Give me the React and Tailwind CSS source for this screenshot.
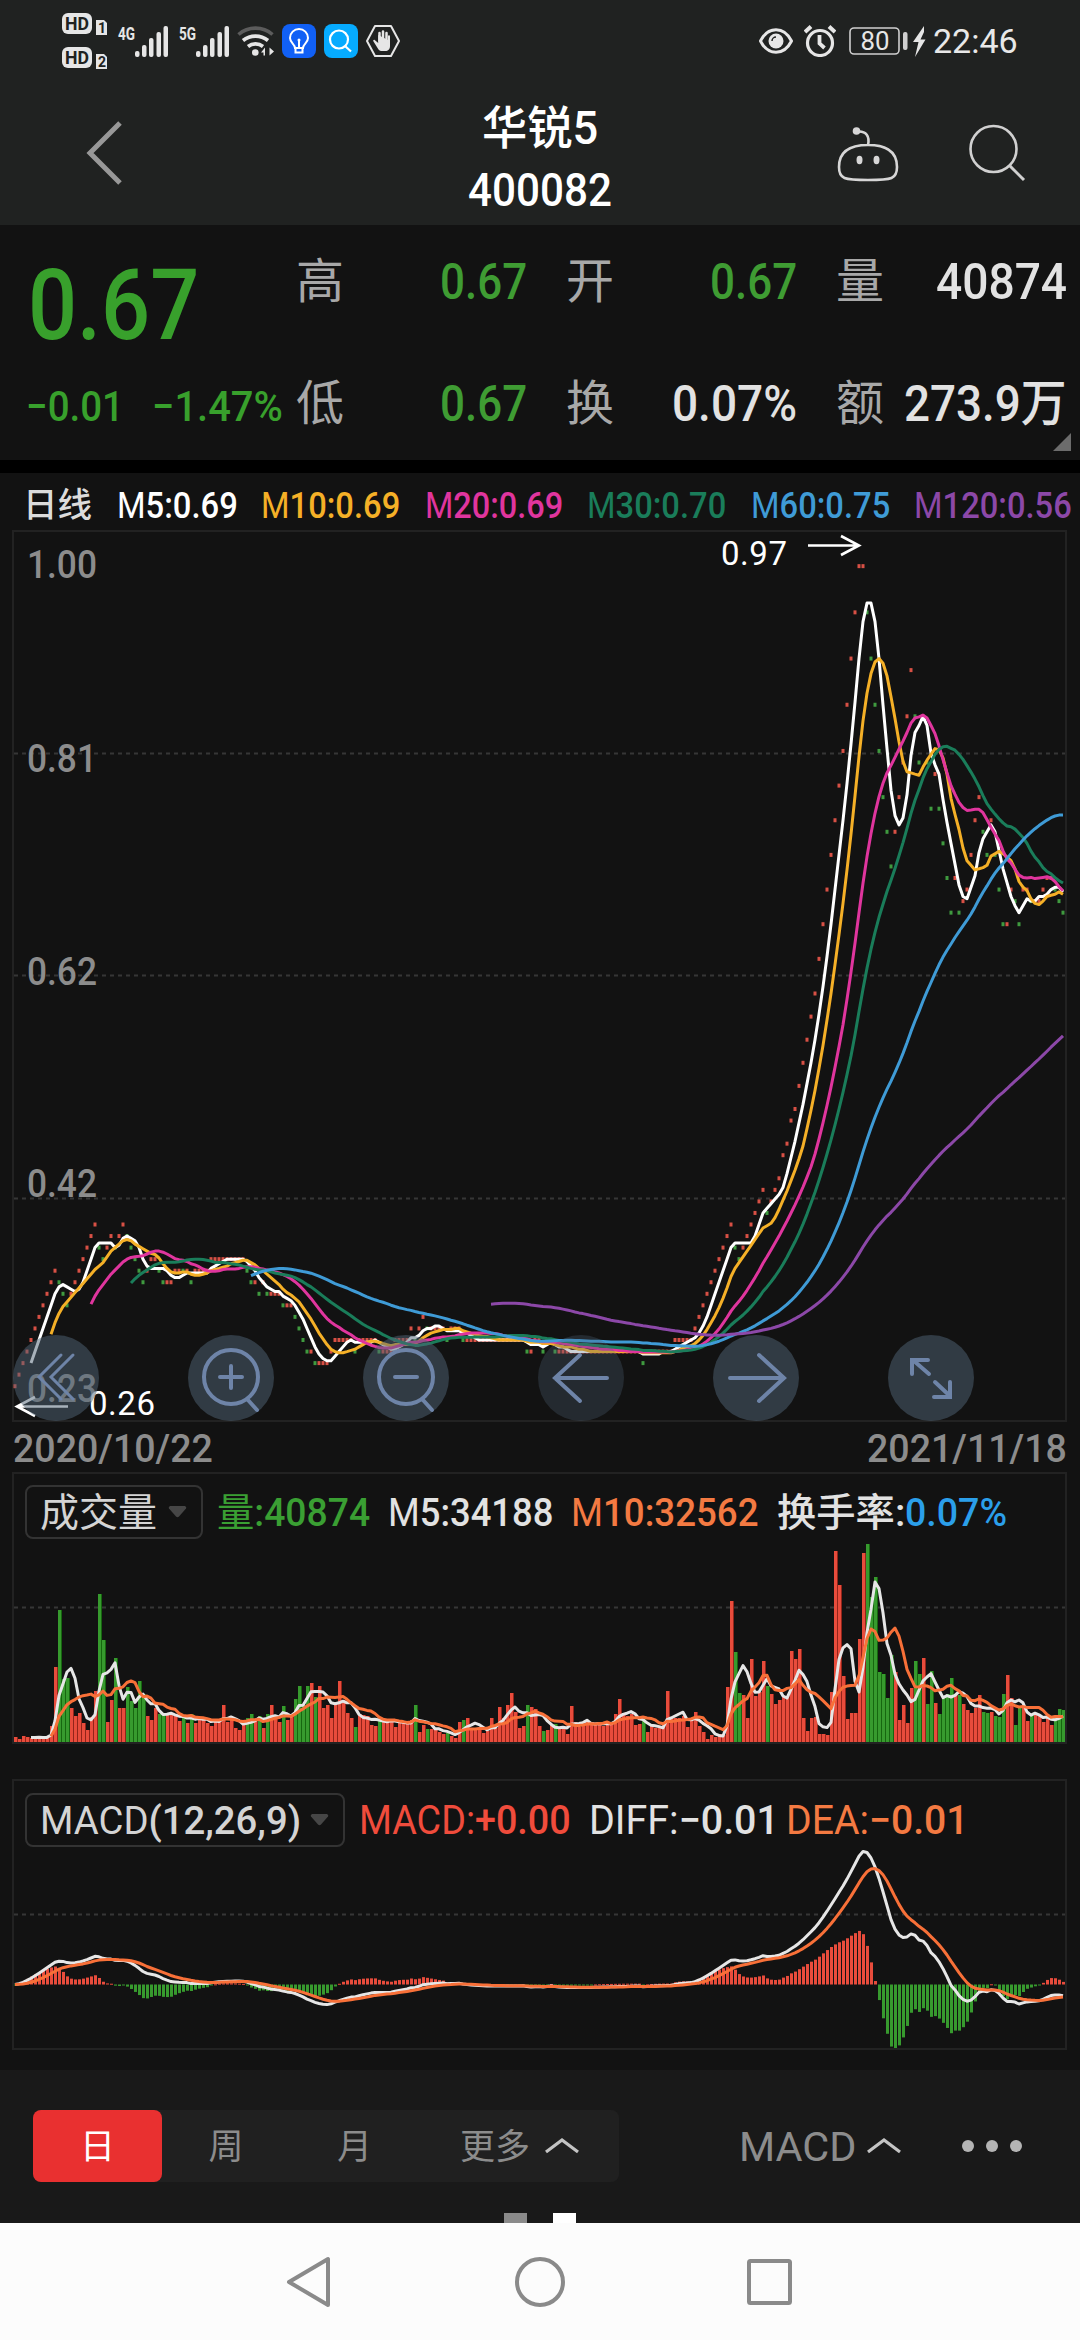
import {useLayoutEffect, useRef} from 'react';
import clsx from 'clsx';

// daily closes, in cents
const CLOSES = [
    26, 27, 28, 29, 30, 31, 32, 33, 34, 35, 36, 35, 34, 33, 34, 35, 36, 37, 38, 39,
    40, 38, 37, 38, 39, 38, 39, 40, 39, 38, 37, 36, 35, 36, 37, 37, 36, 35, 35, 35,
    36, 36, 36, 36, 35, 36, 36, 36, 36, 37, 37, 37, 37, 37, 37, 37, 37, 37, 36, 35,
    35, 34, 35, 34, 34, 34, 34, 33, 33, 33, 32, 31, 30, 29, 29, 28, 28, 28, 28, 29,
    30, 30, 30, 30, 30, 29, 30, 30, 30, 30, 30, 29, 29, 29, 29, 30, 30, 30, 30, 31,
    30, 31, 32, 31, 31, 31, 31, 31, 30, 31, 31, 31, 30, 30, 30, 30, 30, 30, 30, 30,
    30, 30, 30, 30, 30, 30, 30, 30, 29, 29, 30, 30, 29, 30, 30, 29, 29, 29, 29, 29,
    29, 29, 29, 29, 29, 29, 29, 29, 29, 29, 29, 29, 29, 29, 29, 29, 29, 28, 29, 29,
    29, 29, 29, 29, 29, 30, 30, 30, 30, 30, 31, 32, 33, 34, 35, 36, 37, 38, 39, 40,
    38, 37, 38, 39, 40, 41, 42, 43, 41, 42, 43, 44, 46, 47, 49, 50, 52, 54, 56, 58,
    60, 63, 66, 69, 72, 75, 78, 81, 85, 89, 93, 97, 97, 93, 89, 85, 81, 77, 74, 71,
    74, 77, 80, 84, 88, 84, 80, 84, 80, 76, 79, 76, 73, 70, 67, 70, 67, 68, 69, 72,
    75, 77, 74, 72, 75, 72, 69, 66, 66, 69, 68, 66, 69, 69, 68, 68, 68, 69, 70, 70,
    69, 68, 67,
];

// bar heights of the volume panel
const VOLUMES = [
    5, 3, 6, 5, 4, 5, 4, 5, 5, 16, 75, 132, 63, 64, 34, 26, 29, 19, 12, 25,
    51, 148, 102, 20, 42, 84, 34, 34, 55, 41, 34, 61, 48, 26, 22, 34, 28, 28, 27, 27,
    26, 21, 27, 19, 28, 19, 24, 24, 19, 16, 22, 22, 37, 20, 24, 14, 12, 20, 24, 28,
    22, 26, 14, 28, 37, 26, 20, 36, 22, 26, 43, 56, 37, 56, 59, 45, 56, 34, 37, 24,
    40, 61, 42, 29, 24, 15, 28, 27, 26, 17, 16, 24, 22, 22, 22, 15, 20, 20, 18, 22,
    37, 10, 17, 13, 13, 13, 10, 8, 9, 6, 4, 20, 22, 24, 14, 14, 13, 9, 11, 24,
    14, 35, 24, 37, 49, 30, 14, 16, 37, 35, 33, 16, 11, 12, 17, 18, 13, 14, 8, 36,
    20, 15, 18, 20, 20, 17, 18, 16, 20, 20, 28, 43, 27, 26, 28, 17, 18, 23, 10, 16,
    14, 14, 17, 51, 24, 24, 24, 26, 15, 22, 30, 16, 10, 3, 7, 5, 8, 7, 55, 141,
    90, 49, 47, 24, 83, 46, 50, 81, 56, 48, 38, 42, 46, 46, 91, 83, 93, 24, 11, 24,
    25, 8, 8, 7, 50, 191, 157, 66, 23, 29, 29, 103, 189, 198, 145, 165, 70, 68, 44, 87,
    70, 22, 37, 19, 54, 81, 68, 84, 38, 71, 39, 28, 46, 48, 64, 47, 47, 38, 32, 29,
    34, 47, 30, 29, 30, 26, 25, 48, 67, 44, 17, 34, 34, 21, 28, 27, 26, 20, 24, 17,
    24, 33, 32,
];

const DOWN_DAYS = new Set([
    11, 12, 13, 21, 22, 25, 28, 29, 30, 31, 32, 36, 37, 42, 44, 58, 59, 61, 63, 67,
    70, 71, 72, 73, 75, 85, 91, 100, 103, 108, 112, 128, 132, 135, 157, 180, 181, 188,
    213, 214, 215, 216, 217, 218, 219, 225, 226, 228, 229, 231, 232, 233, 234, 236,
    242, 243, 245, 246, 247, 250, 251, 254, 260, 261, 262,
]);

const xAt = (i) => 1 + i * 4;
const priceY = (cents) => (100 - cents) * 11.55 - 0.5;

function movingAverage(values, n) {
    const out = [];
    for (let i = n - 1; i < values.length; i++) {
        let sum = 0;
        for (let k = i - n + 1; k <= i; k++) sum += values[k];
        out.push([i, sum / n]);
    }
    return out;
}

function ema(values, n) {
    const out = [values[0]];
    for (let i = 1; i < values.length; i++) {
        out.push((values[i] * 2 + out[i - 1] * (n - 1)) / (n + 1));
    }
    return out;
}

const toPoints = (pairs, y) => pairs.map(([i, v]) => `${xAt(i)},${y(v).toFixed(1)}`).join(' ');

const slow = ema(CLOSES, 26);
const DIFF = ema(CLOSES, 12).map((v, i) => v - slow[i]);
const DEA = ema(DIFF, 9);
const MACD_SCALE = 133 / Math.max(...DIFF);
const macdY = (v) => 137.5 - v * MACD_SCALE;

// squeezes its text horizontally so that it fills the width of the box
function Fit({className, children}) {
    const box = useRef(null);
    const text = useRef(null);

    useLayoutEffect(() => {
        const ratio = box.current.clientWidth / text.current.offsetWidth;
        text.current.style.transform = `scaleX(${ratio})`;
    }, []);

    return (
        <span ref={box} className={clsx('block shrink-0 whitespace-nowrap leading-none', className)}>
            <span ref={text} className="inline-block origin-left">{children}</span>
        </span>
    );
}

function HdBadge({n}) {
    return (
        <svg width="46" height="22" viewBox="0 0 46 22">
            <rect x="0" y="0" width="30" height="21" rx="6" fill="#e6e6e6" />
            <text x="3" y="17" fontSize="18" fontWeight="700" textLength="24" lengthAdjust="spacingAndGlyphs" fill="#202221">HD</text>
            <path d="M34 7h8l3 3v12H34z" fill="#e6e6e6" />
            <text x="36" y="20" fontSize="14" fontWeight="700" fill="#202221">{n}</text>
        </svg>
    );
}

function Signal({label}) {
    return (
        <svg width="50" height="31" viewBox="0 0 50 31" fill="#e6e6e6" className="overflow-visible">
            <text x="0" y="14" fontSize="19" fontWeight="700" textLength="17" lengthAdjust="spacingAndGlyphs">{label}</text>
            <rect x="17" y="25" width="4.5" height="6" rx="2" />
            <rect x="24" y="19" width="4.5" height="12" rx="2" />
            <rect x="31" y="12" width="4.5" height="19" rx="2" />
            <rect x="38.5" y="6" width="4.5" height="25" rx="2" />
            <rect x="45.5" y="0" width="4.5" height="31" rx="2" />
        </svg>
    );
}

function StatusBar() {
    return (
        <div className="flex h-[82px] items-center pl-[62px] pr-[62px]">
            <div className="flex flex-col gap-[12px]">
                <HdBadge n="1" />
                <HdBadge n="2" />
            </div>
            <div className="ml-[10px] flex gap-[11px]">
                <Signal label="4G" />
                <Signal label="5G" />
            </div>
            <svg className="ml-[8px]" width="38" height="32" viewBox="0 0 38 32" fill="none" strokeWidth="3.6">
                <path d="M1.5 9.5a26 26 0 0 1 34 0" stroke="#5c5c5c" />
                <path d="M6 15.5a20 20 0 0 1 25 0M11 21.5a12 12 0 0 1 15 0" stroke="#e6e6e6" />
                <circle cx="18.3" cy="27.5" r="3.3" fill="#e6e6e6" />
                <path d="M24 27.5l4-5v8h-1.5v-3zM37 26.5l-4.5-4v8z" fill="#e6e6e6" />
            </svg>
            <svg className="ml-[7px]" width="34" height="34" viewBox="0 0 34 34" fill="none" stroke="#fff" strokeWidth="2">
                <rect width="34" height="34" rx="8" fill="#1160f5" stroke="none" />
                <path d="M13 24c0-4-5-5-5-10a9 9 0 0 1 18 0c0 5-5 6-5 10zM13.5 24v4.5h7V24M17 16v8" />
                <circle cx="17" cy="16" r="1.5" fill="#fff" stroke="none" />
            </svg>
            <svg className="ml-[8px]" width="34" height="34" viewBox="0 0 34 34" fill="none" stroke="#fff" strokeWidth="2.2">
                <rect width="34" height="34" rx="8" fill="#06abff" stroke="none" />
                <circle cx="15" cy="15.5" r="9" />
                <path d="M21 22l6 5.5" />
            </svg>
            <svg className="ml-[8px]" width="34" height="34" viewBox="0 0 34 34">
                <path d="M9 2h16l8 15-8 15H9L1 17z" fill="none" stroke="#e6e6e6" strokeWidth="2" strokeLinejoin="round" />
                <path d="M13.5 17V9M17 16V7.5M20.5 17V9" stroke="#e6e6e6" strokeWidth="2.5" strokeLinecap="round" />
                <path d="M12.2 11v8l-3.5-3c-1-.5-2 .5-1.2 1.5l5 8c1 1.300 2 1.500 4 1.500h3c2.500 0 4.500-1.500 4.500-5V12.500c0-1.600-2-1.600-2 0V16z" fill="#e6e6e6" />
            </svg>
            <div className="ml-auto flex items-center">
                <svg width="34" height="26" viewBox="0 0 34 26">
                    <path d="M1.5 13C9-2 25-2 32.5 13 25 28 9 28 1.5 13z" fill="none" stroke="#e6e6e6" strokeWidth="3" />
                    <circle cx="17" cy="13" r="7.5" fill="#e6e6e6" />
                    <path d="M13 13a4 4 0 0 1 4-4" fill="none" stroke="#202221" strokeWidth="1.5" />
                </svg>
                <svg className="ml-[11px]" width="32" height="32" viewBox="0 0 32 32" fill="none" stroke="#e6e6e6" strokeWidth="3.2">
                    <circle cx="16" cy="18" r="12.5" />
                    <path d="M15.5 10v8.5l5 4.5" strokeWidth="3.8" />
                    <path d="M1 7l6-5.5M31 7l-6-5.5" strokeWidth="4" />
                </svg>
                <svg className="ml-[13px]" width="59" height="28" viewBox="0 0 59 28">
                    <rect x="1" y="1" width="49" height="26" rx="4" fill="none" stroke="#cfcfcf" strokeWidth="1.6" />
                    <rect x="54" y="5" width="4.5" height="18" rx="2" fill="#cfcfcf" />
                    <text x="11.5" y="22.5" fontSize="25.5" textLength="29" lengthAdjust="spacingAndGlyphs" fill="#e6e6e6">80</text>
                </svg>
                <svg className="ml-[5px]" width="13" height="31" viewBox="0 0 13 31">
                    <path d="M11 0L0 16h5.5L2 31l10.5-17.5H7.5L11 6z" fill="#e6e6e6" />
                </svg>
                <Fit className="ml-[7px] w-[85px] text-[34px] text-[#e8e8e8]">22:46</Fit>
            </div>
        </div>
    );
}

function TitleBar() {
    return (
        <div className="flex h-[143px] items-start justify-between">
            <div className="w-[300px] pl-[84px] pt-[38px]">
                <svg width="40" height="66" viewBox="0 0 40 66" fill="none">
                    <path d="M36 3L6 33l30 30" stroke="#989898" strokeWidth="5" />
                </svg>
            </div>
            <div className="flex flex-col items-center gap-[16px] pt-[23px] font-medium text-white">
                <Fit className="w-[116px] text-[46px]">华锐5</Fit>
                <Fit className="w-[144px] text-[46px]">400082</Fit>
            </div>
            <div className="flex w-[300px] justify-end gap-[68px] pr-[54px] pt-[42px]">
                <svg width="64" height="60" viewBox="0 0 64 60" fill="none" stroke="#d6d6d6" strokeWidth="2.6">
                    <path d="M32 21C47 21 61 25 61 43c0 12-5 13-29 13S3 55 3 43c0-18 14-22 29-22zM32 21c2-9-2-14-10-13.5" />
                    <circle cx="20.5" cy="7" r="3.8" fill="#d6d6d6" stroke="none" />
                    <ellipse cx="23.5" cy="36" rx="3" ry="4.2" fill="#d6d6d6" stroke="none" />
                    <ellipse cx="40.5" cy="36" rx="3" ry="4.2" fill="#d6d6d6" stroke="none" />
                </svg>
                <svg width="58" height="60" viewBox="0 0 58 60" fill="none" stroke="#d0d0d0" strokeWidth="2.6">
                    <circle cx="25.5" cy="25" r="23" />
                    <path d="M41 41l15 15" strokeWidth="3" />
                </svg>
            </div>
        </div>
    );
}

function QuoteCell({label, className, children}) {
    return (
        <div className="flex h-[50px] w-[231px] items-center justify-between">
            <span className="text-[48px] leading-none text-[#a8a8a8]">{label}</span>
            <Fit className={clsx('text-[50px] font-medium', className)}>{children}</Fit>
        </div>
    );
}

function Quote() {
    return (
        <section className="relative flex h-[235px] pt-[32px]">
            <div className="w-[296px] pl-[28px] text-[#38a02c]">
                <Fit className="w-[171px] text-[98px] font-medium">0.67</Fit>
                <div className="flex pt-[31px]">
                    <Fit className="-ml-[2px] w-[98px] text-[42px] font-medium">−0.01</Fit>
                    <Fit className="ml-[28px] w-[131px] text-[42px] font-medium">−1.47%</Fit>
                </div>
            </div>
            <div className="grid grid-cols-[231px_231px_231px] content-start gap-x-[39px] gap-y-[72px]">
                <QuoteCell label="高" className="w-[87px] text-[#3f9c33]">0.67</QuoteCell>
                <QuoteCell label="开" className="w-[87px] text-[#3f9c33]">0.67</QuoteCell>
                <QuoteCell label="量" className="w-[131px] text-[#e2e2e2]">40874</QuoteCell>
                <QuoteCell label="低" className="w-[87px] text-[#3f9c33]">0.67</QuoteCell>
                <QuoteCell label="换" className="w-[125px] text-[#e2e2e2]">0.07%</QuoteCell>
                <QuoteCell label="额" className="w-[163px] text-[#e2e2e2]">273.9万</QuoteCell>
            </div>
            <svg className="absolute bottom-[9px] right-[9px]" width="18" height="18" viewBox="0 0 18 18">
                <path d="M18 0v18H0z" fill="#6c6c6c" />
            </svg>
        </section>
    );
}

function Average({name, value, className}) {
    return (
        <Fit className={clsx('text-[36px] font-medium', className)}>
            <span className="font-normal">M</span>{name}:{value}
        </Fit>
    );
}

function AverageLegend() {
    return (
        <div className="flex h-[57px] pl-[23px] pt-[15px]">
            <Fit className="w-[69px] text-[34px] font-medium text-[#dcdcdc]">日线</Fit>
            <Average name="5" value="0.69" className="ml-[25px] w-[121px] text-white" />
            <Average name="10" value="0.69" className="ml-[23px] w-[139px] text-[#f5b027]" />
            <Average name="20" value="0.69" className="ml-[25px] w-[138px] text-[#e0359e]" />
            <Average name="30" value="0.70" className="ml-[24px] w-[139px] text-[#1a7d5a]" />
            <Average name="60" value="0.75" className="ml-[25px] w-[139px] text-[#3f9bd6]" />
            <Average name="120" value="0.56" className="ml-[24px] w-[158px] text-[#8c48a8]" />
        </div>
    );
}

function GridLine({y}) {
    return <line x1="0" x2="1051" y1={y} y2={y} stroke="#363636" strokeWidth="2" strokeDasharray="4 4" />;
}

const AVERAGES = [
    {days: 5, color: '#ffffff'},
    {days: 10, color: '#f5b027'},
    {days: 20, color: '#e0359e'},
    {days: 30, color: '#1a7d5a'},
    {days: 60, color: '#3f9bd6'},
    {days: 120, color: '#8c48a8'},
];

const AXIS = [
    {label: '1.00', y: 46},
    {label: '0.81', y: 240},
    {label: '0.62', y: 453},
    {label: '0.42', y: 665},
    {label: '0.23', y: 870},
];

function RoundButton({dim, children}) {
    return (
        <button
            className={clsx(
                'flex size-[86px] items-center justify-center rounded-full',
                dim ? 'bg-[#506476]/30' : 'bg-[#506476]/50'
            )}
        >
            <svg width="86" height="86" viewBox="0 0 86 86" fill="none" stroke="#6e84a8" strokeWidth="4" strokeLinecap="round">
                {children}
            </svg>
        </button>
    );
}

function PriceChart() {
    return (
        <section className="relative mx-[12px] h-[892px] w-[1055px] border-2 border-[#222]">
            <svg width="1051" height="888" viewBox="0 0 1051 888" className="block overflow-visible">
                <GridLine y={221.5} />
                <GridLine y={443.5} />
                <GridLine y={666.5} />
                {CLOSES.map((c, i) => (
                    <rect
                        key={i}
                        x={xAt(i) - 1.5}
                        y={priceY(c) - 2}
                        width="3"
                        height="4"
                        fill={DOWN_DAYS.has(i) ? '#3f9a3f' : '#d85045'}
                    />
                ))}
                {AVERAGES.map(({days, color}) => (
                    <polyline
                        key={days}
                        points={toPoints(movingAverage(CLOSES, days), priceY)}
                        fill="none"
                        stroke={color}
                        strokeWidth="3"
                        strokeLinejoin="round"
                    />
                ))}
                {AXIS.map(({label, y}) => (
                    <text key={label} x="13" y={y} fontSize="39" fontWeight="500" textLength="70" lengthAdjust="spacingAndGlyphs" fill="#8c8c8c">
                        {label}
                    </text>
                ))}
                <g fill="#fff" fontSize="33">
                    <text x="707" y="33" textLength="66">0.97</text>
                    <text x="75" y="883" textLength="66">0.26</text>
                </g>
                <g fill="none" stroke="#fff" strokeWidth="2.6">
                    <path d="M794 13.5h50M827 4l18 9.5-18 9.5" />
                    <path d="M54 874.5H4M21 865L3 874.5l18 9.5" />
                </g>
            </svg>
            <div className="absolute left-[-1px] top-[803px] flex gap-[89px]">
                <RoundButton>
                    <path d="M48 20L26 42l22 22M60 20L38 42l22 22" strokeWidth="3" />
                </RoundButton>
                <RoundButton>
                    <circle cx="43" cy="42" r="27" />
                    <path d="M60 65l9 10M32 42h22M43 31v22" />
                </RoundButton>
                <RoundButton>
                    <circle cx="43" cy="42" r="27" />
                    <path d="M60 65l9 10M32 42h22" />
                </RoundButton>
                <RoundButton dim>
                    <path d="M69 43H17M42 20L17 43l25 23" />
                </RoundButton>
                <RoundButton>
                    <path d="M17 43h52M46 20l25 23-25 23" />
                </RoundButton>
                <RoundButton>
                    <path d="M24 39V25h16M26 26l15 13M62 47v15H46M47 47l15 14" />
                </RoundButton>
            </div>
        </section>
    );
}

function Picker({className, children}) {
    return (
        <button className={clsx('flex h-[54px] shrink-0 items-center rounded-[8px] border-2 border-[#333] pl-[13px] text-[#d4d4d4]', className)}>
            {children}
            <svg className="ml-auto mr-[14px]" width="19" height="12" viewBox="0 0 19 12">
                <path d="M2 0h15q2 1 1 2.5l-7 8q-1.500 1.500-3 0l-7-8Q0 1 2 0z" fill="#464646" />
            </svg>
        </button>
    );
}

function Line({pairs, y, color}) {
    return <polyline points={toPoints(pairs, y)} fill="none" stroke={color} strokeWidth="3" strokeLinejoin="round" />;
}

function VolumePanel() {
    const y = (v) => 200 - v;

    return (
        <section className="mx-[12px] h-[272px] w-[1055px] border-2 border-[#222]">
            <div className="flex h-[68px] items-start pl-[11px] pt-[11px]">
                <Picker className="w-[178px]">
                    <span className="pt-[3px] text-[39px] leading-none">成交量</span>
                </Picker>
                <div className="flex h-[54px] items-center pt-[3px] text-[39px] font-medium">
                    <Fit className="ml-[14px] w-[153px] text-[#3a9f33]"><span className="font-normal">量</span>:40874</Fit>
                    <Fit className="ml-[18px] w-[165px] text-[#e2e2e2]"><span className="font-normal">M</span>5:34188</Fit>
                    <Fit className="ml-[18px] w-[188px] text-[#f47a42]"><span className="font-normal">M</span>10:32562</Fit>
                    <Fit className="ml-[18px] w-[128px] text-[#e2e2e2]">换手率:</Fit>
                    <Fit className="w-[102px] text-[#2b9fea]">0.07%</Fit>
                </div>
            </div>
            <svg width="1051" height="200" viewBox="0 0 1051 200" className="block">
                <GridLine y={65.5} />
                {VOLUMES.map((v, i) => (
                    <g key={i}>
                        <rect x={xAt(i) - 1} y={y(v)} width="4" height={v} fill={DOWN_DAYS.has(i) ? '#16660f' : '#92241a'} />
                        <rect x={xAt(i) - 1} y={y(v)} width="3" height={v} fill={DOWN_DAYS.has(i) ? '#379a2e' : '#e84c3c'} />
                    </g>
                ))}
                <Line pairs={movingAverage(VOLUMES, 5)} y={y} color="#e6e6e6" />
                <Line pairs={movingAverage(VOLUMES, 10)} y={y} color="#f87038" />
            </svg>
        </section>
    );
}

function MacdPanel() {
    return (
        <section className="mx-[12px] mt-[35px] h-[271px] w-[1055px] border-2 border-[#222]">
            <div className="flex h-[66px] items-start pl-[11px] pt-[12px]">
                <Picker className="w-[320px]">
                    <Fit className="w-[261px] pt-[3px] text-[39px]">MACD<span className="font-medium">(12,26,9)</span></Fit>
                </Picker>
                <div className="flex h-[54px] items-center pt-[2px] text-[40px]">
                    <Fit className="ml-[14px] w-[212px] text-[#f04c3c]">MACD:<span className="font-medium">+0.00</span></Fit>
                    <Fit className="ml-[18px] w-[190px] text-[#e2e2e2]">DIFF:<span className="font-medium">−0.01</span></Fit>
                    <Fit className="ml-[7px] w-[183px] text-[#f47a42]">DEA:<span className="font-medium">−0.01</span></Fit>
                </div>
            </div>
            <svg width="1051" height="201" viewBox="0 0 1051 201" className="block">
                <GridLine y={67.5} />
                {DIFF.map((d, i) => {
                    const bar = 2 * (d - DEA[i]) * MACD_SCALE;
                    return (
                        <rect
                            key={i}
                            x={xAt(i) - 1}
                            y={bar > 0 ? 137.5 - bar : 137.5}
                            width="3"
                            height={Math.max(1, Math.abs(bar))}
                            fill={bar > 0 ? '#e84c3c' : '#379a2e'}
                        />
                    );
                })}
                <Line pairs={DIFF.map((v, i) => [i, v])} y={macdY} color="#e6e6e6" />
                <Line pairs={DEA.map((v, i) => [i, v])} y={macdY} color="#f87038" />
            </svg>
        </section>
    );
}

function ChevronUp({className}) {
    return (
        <svg className={className} width="36" height="18" viewBox="0 0 36 18" fill="none">
            <path d="M2 15L18 3l16 12" stroke="#c4c4c4" strokeWidth="3.2" />
        </svg>
    );
}

function Toolbar() {
    return (
        <div className="relative mt-[20px] flex h-[153px] items-start bg-[#191919] pl-[33px] pt-[40px] text-[35px] leading-none text-[#8c8c8c]">
            <div className="flex h-[72px] w-[586px] items-center rounded-[8px] bg-[#202020]">
                <button className="h-full w-[129px] rounded-[8px] bg-[#e93030] pt-[3px] text-white">日</button>
                <button className="h-full w-[128px] pt-[3px]">周</button>
                <button className="h-full w-[129px] pt-[3px]">月</button>
                <button className="ml-[41px] flex h-full items-center">
                    <span className="pt-[3px]">更多</span>
                    <ChevronUp className="ml-[14px]" />
                </button>
            </div>
            <button className="ml-[118px] flex h-[72px] items-center">
                <Fit className="w-[117px] pt-[3px] text-[40px]">MACD</Fit>
                <ChevronUp className="ml-[12px]" />
            </button>
            <div className="ml-[60px] flex h-[72px] items-center gap-[12px]">
                <span className="size-[12px] rounded-full bg-[#b4b4b4]" />
                <span className="size-[12px] rounded-full bg-[#b4b4b4]" />
                <span className="size-[12px] rounded-full bg-[#b4b4b4]" />
            </div>
            <div className="absolute bottom-0 left-[504px] flex gap-[26px]">
                <span className="h-[10px] w-[23px] bg-[#8a8a8a]" />
                <span className="h-[10px] w-[23px] bg-white" />
            </div>
        </div>
    );
}

function NavBar() {
    return (
        <div className="flex h-[117px] items-center justify-center gap-[172px] bg-[#fcfcfc]">
            <svg width="56" height="56" viewBox="0 0 56 56" fill="none" stroke="#8a8a8a" strokeWidth="4" strokeLinejoin="round">
                <path d="M44 5v46L5 28z" />
            </svg>
            <svg width="56" height="56" viewBox="0 0 56 56" fill="none" stroke="#8a8a8a" strokeWidth="4">
                <circle cx="28" cy="28" r="23" />
            </svg>
            <svg width="56" height="56" viewBox="0 0 56 56" fill="none" stroke="#8a8a8a" strokeWidth="4">
                <rect x="9" y="7" width="41" height="42" rx="1.5" />
            </svg>
        </div>
    );
}

export default function App() {
    return (
        <div className="h-[2340px] w-[1080px] overflow-hidden bg-[#121212] font-['Roboto','Noto_Sans_CJK_SC',sans-serif]">
            <header className="h-[225px] bg-[#202221]">
                <StatusBar />
                <TitleBar />
            </header>
            <Quote />
            <div className="h-[13px] bg-black" />
            <AverageLegend />
            <PriceChart />
            <div className="flex h-[50px] justify-between pl-[13px] pr-[13px] pt-[8px] text-[39px] font-medium text-[#8c8c8c]">
                <Fit className="w-[200px]">2020/10/22</Fit>
                <Fit className="w-[200px]">2021/11/18</Fit>
            </div>
            <VolumePanel />
            <MacdPanel />
            <Toolbar />
            <NavBar />
        </div>
    );
}
